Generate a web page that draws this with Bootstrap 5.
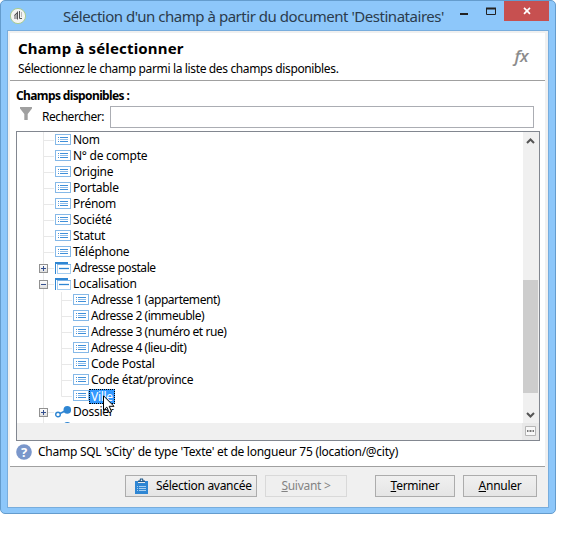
<!DOCTYPE html>
<html lang="fr">
<head>
<meta charset="utf-8">
<title>Sélection d'un champ</title>
<link href="https://cdn.jsdelivr.net/npm/bootstrap@5.3.0/dist/css/bootstrap.min.css" rel="stylesheet">
<style>
body{background:#fff;font:12px/16px "Noto Sans","Open Sans",sans-serif;color:#000;letter-spacing:-.26px;overflow:hidden;white-space:nowrap}
svg{display:block;flex:none}
.win{width:556px;height:514px;background:#8dc7fa;border:1px solid #649ccd;border-radius:5px;padding:0 6px 6px}
.titlebar{height:29px;font-size:15px;line-height:30px;color:#2b3c4d}
.app-icon{margin:6px 0 0 2px}
.title-txt{margin-left:36px;letter-spacing:-.47px;width:390px}
.close-box{width:45px;height:20px;background:#c75050}
.client{height:478px;background:#f0f0f0;border:1px solid #78addd;padding:2px 3px 0 2px}
.head{height:48px;background:#fff;border-bottom:1px solid #a0a0a0;padding:5px 0 0 8px}
.head-title{font-size:15px;line-height:20px;letter-spacing:.16px}
.head-sub{margin-top:3px;letter-spacing:-.36px}
.fx-txt{font:italic 600 17px/20px "Open Sans",sans-serif;color:#8c8c8c;letter-spacing:-.5px;margin:8px 17px 0 0}
.main{height:386px;background:#fff;border-bottom:1px solid #a0a0a0;padding:7px 6px 0}
.avail{letter-spacing:-.62px}
.search-row{margin-top:2px}
.search-row label{letter-spacing:-.45px}
.search{height:22px;border:1px solid #abadb3;border-radius:0;padding:0 4px;width:424px;margin-right:5px}
.tree{width:524px;height:310px;border:1px solid #828790;margin-top:3px}
.rows{width:506px;height:291px;overflow:hidden;padding-left:17px}
.node{height:16px;display:flex;align-items:center}
.node span{margin-left:2px}
.node .tight{letter-spacing:-.44px}
.sel{background:#3399ff;color:#fff;outline:1px dotted #000;outline-offset:-1px;margin-left:0!important;padding:0 2px;line-height:15px;letter-spacing:-.3px}
.sbar{width:16px;height:291px;background:#f0f0f0}
.thumb{width:15px;height:113px;background:#cdcdcd}
.strip{height:17px;background:#f0f0f0}
.hint{margin-top:3px}
.hint span{margin-left:6px}
.foot{height:39px;padding:8px 8px 0 0}
.foot .btn{font-size:12px;line-height:20px;height:22px;padding:0;border:1px solid #acacac;border-radius:0;background:linear-gradient(#f0f0f0,#e5e5e5);color:#000;letter-spacing:-.28px}
.foot .btn:disabled{opacity:1;background:#efefef;border-color:#d9d9d9;color:#838383}
.foot .b-adv{width:132px;padding-left:9px}
.b-adv svg{margin-right:8px}
.b-next{width:82px;margin-left:8px}
.b-end{width:80px;margin-left:28px}
.b-cancel{width:74px;margin-left:8px}
.cursor{left:102px;top:394px}
</style>
<script src="https://cdn.jsdelivr.net/npm/bootstrap@5.3.0/dist/js/bootstrap.bundle.min.js"></script>
</head>
<body>
<svg width="0" height="0" class="position-absolute">
<defs>
<symbol id="field" viewBox="0 0 16 12"><rect x=".5" y=".5" width="15" height="10" fill="#fff" stroke="#86b9e8"/><path d="M3 3.500h1M3 7.500h1M5 3.500h8M5 7.500h8" stroke="#3f8fd9"/><path d="M3 5.500h1M5 5.500h8" stroke="#8fbdea"/></symbol>
<symbol id="folder" viewBox="0 0 16 12"><path d="M0 12V0h13v2H1v10z" fill="#2f86d3"/><rect x="2.500" y="2.500" width="13" height="9" fill="#fff" stroke="#a6cdf0"/><path d="M2 2.500h14" stroke="#7ab3e8"/><path d="M4 6.500h10" stroke="#2f86d3" stroke-width="1.300"/></symbol>
<symbol id="link" viewBox="0 0 16 12"><path d="M3 8.500L12 4" stroke="#2f86d3" stroke-width="1.700"/><circle cx="3" cy="8.500" r="2.300" fill="#fff" stroke="#2f86d3" stroke-width="1.400"/><circle cx="12.300" cy="3.900" r="3.800" fill="#2f86d3"/></symbol>
<linearGradient id="g" x2="0" y2="1"><stop stop-color="#fff"/><stop offset="1" stop-color="#ddd"/></linearGradient>
</defs>
</svg>
<div class="win position-relative">
  <div class="titlebar d-flex">
    <svg class="app-icon" width="18" height="18" viewBox="0 0 18 18"><circle cx="9" cy="9" r="7.600" fill="#f4f4f1" stroke="#a9cc91"/><path d="M5 12V8l3-3v7z" fill="#aaa"/><path d="M8.500 4.500v8M5.500 8.500l3-3M10.500 4v7.500h2.500" stroke="#555" fill="none"/><path d="M12.500 5v5" stroke="#bbb"/></svg>
    <div class="title-txt">Sélection d'un champ à partir du document 'Destinataires'</div>
    <svg width="50" height="28" viewBox="0 0 50 28" class="ms-auto"><path d="M6 13h8" stroke="#222" stroke-width="2"/><path d="M32.500 7.500h9v6h-9z" fill="none" stroke="#222"/><path d="M32 7.500h10" stroke="#222" stroke-width="2"/></svg>
    <div class="close-box d-flex align-items-center justify-content-center"><svg width="8" height="8" viewBox="0 0 8 8"><path d="M1 .8l6 6M7 .8l-6 6" stroke="#fff" stroke-width="1.700"/></svg></div>
  </div>
  <div class="client">
    <div class="head d-flex justify-content-between">
      <div><div class="head-title fw-bold">Champ à sélectionner</div><div class="head-sub">Sélectionnez le champ parmi la liste des champs disponibles.</div></div>
      <div class="fx-txt">fx</div>
    </div>
    <div class="main">
      <div class="avail fw-bold">Champs disponibles :</div>
      <div class="search-row d-flex align-items-center">
        <svg width="26" height="22" viewBox="0 0 26 22"><path d="M4 1h12v1.500L11.700 8v6H8.300V8L4 2.500z" fill="#a0a0a0"/></svg>
        <label for="q">Rechercher:</label>
        <input id="q" class="search form-control ms-auto">
      </div>
      <div class="tree">
        <div class="d-flex">
          <div class="rows" id="rows"></div>
          <div class="sbar d-flex flex-column"><svg width="15" height="148" viewBox="0 0 15 148"><path d="M4 11l3.500-3.500L11 11" fill="none" stroke="#555" stroke-width="2"/></svg><div class="thumb"></div><svg width="15" height="30" viewBox="0 0 15 30"><path d="M4 20l3.500 3.500L11 20" fill="none" stroke="#555" stroke-width="2"/></svg></div>
        </div>
        <div class="strip d-flex justify-content-end"><svg width="17" height="17" viewBox="0 0 17 17"><path d="M0 0h17v17H0z" fill="#e8e8e8"/><path d="M3.500 3.500h10v9h-10z" fill="#f8f8f8" stroke="#b5b5b5"/><path d="M5 8h7" stroke="#bbb" stroke-width="2"/><path d="M5 8h1M8 8h1M11 8h1" stroke="#777" stroke-width="2"/></svg></div>
      </div>
      <div class="hint d-flex align-items-center"><svg width="16" height="16" viewBox="0 0 16 16"><circle cx="8" cy="8" r="7.800" fill="#7a97cb"/><text x="8" y="12.700" text-anchor="middle" font-size="13" font-weight="bold" fill="#fff">?</text></svg><span>Champ SQL 'sCity' de type 'Texte' et de longueur 75 (location/@city)</span></div>
    </div>
    <div class="foot d-flex justify-content-end">
      <button class="btn b-adv d-flex align-items-center"><svg width="13" height="17" viewBox="0 0 13 17"><path d="M0 3h3v2h7V3h3v13H0z" fill="#2f86d3"/><path d="M3 4V2.500h1.500L5 .6h3l.5 1.900H10V4z" fill="#225b8c"/><circle cx="6.500" cy="2.200" r=".8" fill="#fff"/><path d="M2 8.500h1M4 8.500h7M2 10.500h1M4 10.500h7M2 12.500h1M4 12.500h7" stroke="#a8cff0"/></svg><span>Sélection avancée</span></button>
      <button class="btn b-next" disabled><u>S</u>uivant &gt;</button>
      <button class="btn b-end"><u>T</u>erminer</button>
      <button class="btn b-cancel"><u>A</u>nnuler</button>
    </div>
  </div>
  <svg class="cursor position-absolute" width="13" height="19" viewBox="0 0 13 19"><path d="M.5.8v14.500l3.300-3.200 2.400 5.500 2.400-1-2.400-5.300H11z" fill="#fff" stroke="#000"/></svg>
</div>
<script>
// [label, depth, icon, expander]
const data=[["Nom",1],["N° de compte",1],["Origine",1],["Portable",1],["Prénom",1],["Société",1],["Statut",1],["Téléphone",1],
["Adresse postale",1,"folder","+"],["Localisation",1,"folder","-"],["Adresse 1 (appartement)",2],["Adresse 2 (immeuble)",2],["Adresse 3 (numéro et rue)",2],["Adresse 4 (lieu-dit)",2],["Code Postal",2],["Code état/province",2],["Ville",2],["Dossier",1,"link","+"],["",1,"link"]];
document.getElementById("rows").innerHTML=data.map(([t,d,ic="field",ex])=>{
 const w=d===2?39:21,x=d===2?27.5:9.5;
 let g=`<path d="M9.500 0v16" stroke="#e8e8e8"/><path d="M${x} 8.500H${w-1}" stroke="#e8e8e8"/>`;
 if(d===2)g+=`<path d="M27.500 0v${t==="Ville"?8.5:16}" stroke="#e8e8e8"/>`;
 if(ex)g+=`<rect x="5.500" y="4.500" width="8" height="8" fill="url(#g)" stroke="#919191"/><path d="M7 8.500h5${ex==="+"?"M9.500 6v5":""}" stroke="#35508f"/>`;
 const cls=t==="Ville"?"sel":t.startsWith("Adresse")?"tight":"";
 return `<div class="node"><svg width="${w}" height="16">${g}</svg><svg width="16" height="12"><use href="#${ic}"/></svg><span class="${cls}">${t}</span></div>`;
}).join("");
</script>
</body>
</html>
